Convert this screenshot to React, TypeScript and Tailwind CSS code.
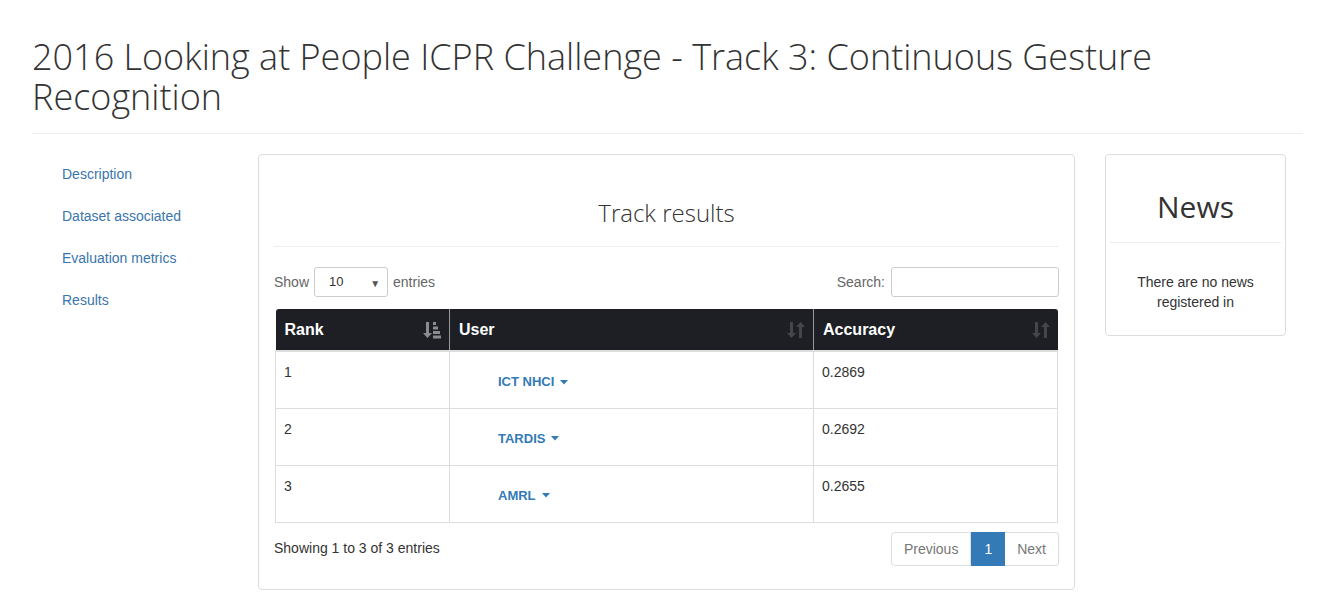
const ROWS = [
    { rank: 1, user: 'ICT NHCI', accuracy: '0.2869' },
    { rank: 2, user: 'TARDIS', accuracy: '0.2692' },
    { rank: 3, user: 'AMRL', accuracy: '0.2655' },
];

const NAV = ['Description', 'Dataset associated', 'Evaluation metrics', 'Results'];

// sort-by-attributes glyph (active column)
function SortAttrIcon() {
    return (
        <svg width="18" height="18" viewBox="0 0 18 18" fill="currentColor">
            <path d="M3 1h3v11h3l-4.5 5L0 12h3z" />
            <rect x="10" y="1" width="3" height="3" />
            <rect x="10" y="5.5" width="5" height="3" />
            <rect x="10" y="10" width="7" height="3" />
            <rect x="10" y="14.5" width="8" height="3" />
        </svg>
    );
}

// plain sort glyph (inactive columns)
function SortIcon() {
    return (
        <svg width="18" height="18" viewBox="0 0 18 18" fill="currentColor">
            <path d="M3 1h3v11h3l-4.5 5L0 12h3z" />
            <path d="M12 17h3V6h3l-4.5-5L9 6h3z" />
        </svg>
    );
}

export default function App() {
    return (
        <div className="min-h-screen bg-white pl-8 pr-6 text-[14px] text-[#333] font-['Liberation_Sans',Arial,sans-serif]">
            <h1 className="pt-[37px] pb-[16px] text-[36px] leading-[40px] font-light text-[#333] font-['Open_Sans',sans-serif] border-b border-[#eee]">
                2016 Looking at People ICPR Challenge - Track 3: Continuous Gesture Recognition
            </h1>

            <div className="flex mt-[20px] items-start">
                <ul className="w-[226px] shrink-0">
                    {NAV.map(item => (
                        <li key={item} className="mb-[2px]">
                            <a className="block pl-[30px] py-[10px] leading-[20px] text-[#3a75ad]">{item}</a>
                        </li>
                    ))}
                </ul>

                <div className="w-[817px] shrink-0 border border-[#ddd] rounded-[4px] px-[15px] pb-[23px]">
                    <h3 className="pt-[43px] text-center text-[24px] leading-[30px] font-light font-['Open_Sans',sans-serif] text-[#333]">
                        Track results
                    </h3>
                    <div className="mt-[18px] border-t border-[#eee]" />

                    <div className="flex items-center justify-between mt-[20px] text-[#666]">
                        <div className="flex items-center gap-[5px]">
                            <span>Show</span>
                            <div className="relative w-[74px] h-[30px] border border-[#ccc] rounded-[3px] flex items-center pl-[14px] text-[#333] text-[13px]">
                                10
                                <span className="absolute right-[7px] top-[8px] text-[10px] text-[#555]">▼</span>
                            </div>
                            <span>entries</span>
                        </div>
                        <div className="flex items-center gap-[6px]">
                            <span>Search:</span>
                            <div className="w-[168px] h-[30px] border border-[#ccc] rounded-[3px]" />
                        </div>
                    </div>

                    <table className="mt-[12px] mx-px w-[783px] border-collapse">
                        <thead>
                            <tr className="bg-[#1d1f24] text-white text-[16px] font-bold h-[42px]">
                                <th className="w-[174px] text-left pl-[9px] pr-[8px] border-r border-[#999] rounded-tl-[3px]">
                                    <div className="flex items-center justify-between">
                                        <span>Rank</span>
                                        <span className="text-[#8a8c90]"><SortAttrIcon /></span>
                                    </div>
                                </th>
                                <th className="w-[364px] text-left pl-[9px] pr-[8px] border-r border-[#999]">
                                    <div className="flex items-center justify-between">
                                        <span>User</span>
                                        <span className="text-[#44464b]"><SortIcon /></span>
                                    </div>
                                </th>
                                <th className="text-left pl-[9px] pr-[8px] rounded-tr-[3px]">
                                    <div className="flex items-center justify-between">
                                        <span>Accuracy</span>
                                        <span className="text-[#44464b]"><SortIcon /></span>
                                    </div>
                                </th>
                            </tr>
                        </thead>
                        <tbody className="border-t-2 border-[#ddd]">
                            {ROWS.map(row => (
                                <tr key={row.rank} className="h-[57px] border-b border-[#ddd] align-top">
                                    <td className="border-l border-r border-[#ddd] pl-[8px] pt-[10px] leading-[20px]">{row.rank}</td>
                                    <td className="border-r border-[#ddd] pl-[48px] pt-[19px]">
                                        <span className="inline-flex items-center gap-[6px] text-[13px] font-bold text-[#337ab7] leading-[20px]">
                                            {row.user}
                                            <svg width="8" height="5" viewBox="0 0 8 5" fill="currentColor">
                                                <path d="M0 0h8L4 4.5z" />
                                            </svg>
                                        </span>
                                    </td>
                                    <td className="border-r border-[#ddd] pl-[8px] pt-[10px] leading-[20px]">{row.accuracy}</td>
                                </tr>
                            ))}
                        </tbody>
                    </table>

                    <div className="flex items-center justify-between mt-[9px]">
                        <span className="text-[#333]">Showing 1 to 3 of 3 entries</span>
                        <div className="flex h-[34px] leading-[20px]">
                            <span className="px-[12px] py-[6px] border border-[#ddd] rounded-l-[4px] text-[#777]">Previous</span>
                            <span className="px-[12px] py-[6px] border border-[#337ab7] bg-[#337ab7] text-white">1</span>
                            <span className="px-[12px] py-[6px] border border-[#ddd] border-l-0 rounded-r-[4px] text-[#777]">Next</span>
                        </div>
                    </div>
                </div>

                <div className="w-[181px] ml-[30px] shrink-0 border border-[#ddd] rounded-[4px] px-[4px] pb-[23px]">
                    <h2 className="pt-[32px] text-center text-[30px] leading-[40px] font-['Open_Sans',sans-serif] text-[#333]">
                        News
                    </h2>
                    <div className="mt-[15px] border-t border-[#eee]" />
                    <p className="mt-[29px] text-center leading-[20px] text-[#333]">
                        There are no news
                        <br />
                        registered in
                    </p>
                </div>
            </div>
        </div>
    );
}
